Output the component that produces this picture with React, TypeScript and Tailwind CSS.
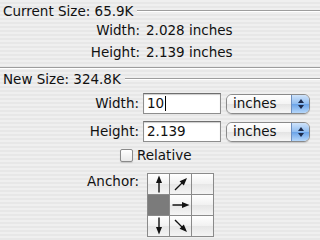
import React from "react";

const stripes =
  "bg-[repeating-linear-gradient(to_bottom,#efefef_0px,#efefef_2px,#e7e7e7_2px,#e7e7e7_4px)]";

const SectionHeader = ({ title }: { title: string }) => (
  <div className="flex h-[16px] items-center gap-[4px] pl-[3px]">
    <span className="whitespace-nowrap">{title}</span>
    <div className="h-[2px] flex-1 border-t border-b border-t-[#9d9d9d] border-b-white" />
  </div>
);

const InfoRow = ({ label, value }: { label: string; value: string }) => (
  <div className="flex h-[22px] items-center">
    <span className="w-[140px] text-right">{label}</span>
    <span className="pl-[6px]">{value}</span>
  </div>
);

const UnitSelect = () => (
  <div className="flex h-[20px] w-[84px] overflow-hidden rounded-[6px] border border-[#8a8a8a] shadow-[0_1px_1px_rgba(0,0,0,0.15)]">
    <div className="flex flex-1 items-center bg-[linear-gradient(to_bottom,#ffffff,#f3f3f3_50%,#e4e4e4_51%,#f6f6f6)] pl-[6px]">
      inches
    </div>
    <div className="flex w-[18px] flex-col items-center justify-center gap-[2px] border-l border-[#6d8fc0] bg-[linear-gradient(to_bottom,#cfe3fa,#8fbcf0_50%,#6aa3e8_51%,#b6d7fa)]">
      <svg width="6" height="4" viewBox="0 0 6 4">
        <polygon points="3,0 6,4 0,4" fill="#1c2a4a" />
      </svg>
      <svg width="6" height="4" viewBox="0 0 6 4">
        <polygon points="0,0 6,0 3,4" fill="#1c2a4a" />
      </svg>
    </div>
  </div>
);

const InputRow = ({ label, value, caret }: { label: string; value: string; caret?: boolean }) => (
  <div className="flex h-[21px] items-center">
    <span className="w-[139px] text-right">{label}</span>
    <div className="ml-[4px] flex h-[21px] w-[78px] items-center border border-[#8e8e8e] border-t-[#6e6e6e] bg-white pl-[3px] shadow-[inset_0_1px_1px_rgba(0,0,0,0.2)]">
      {value}
      {caret && <span className="ml-[1px] h-[15px] w-px bg-black" />}
    </div>
    <div className="ml-[5px]">
      <UnitSelect />
    </div>
  </div>
);

const Arrow = ({ rotate }: { rotate: number }) => (
  <svg width="18" height="18" viewBox="0 0 18 18" style={{ transform: `rotate(${rotate}deg)` }}>
    <line x1="9" y1="17.5" x2="9" y2="6" stroke="#111" strokeWidth="1.4" />
    <polygon points="9,0.5 6,8 12,8" fill="#111" />
  </svg>
);

const cells: (number | null | "fill")[] = [0, 45, null, "fill", 90, null, 180, 135, null];

const AnchorGrid = () => (
  <div className="grid grid-cols-[22px_22px_22px] grid-rows-[21px_21px_21px] border-t border-l border-[#8a8a8a]">
    {cells.map((c, i) => (
      <div
        key={i}
        className={
          c === "fill"
            ? "flex items-center justify-center border-r border-b border-[#8a8a8a] bg-[#7b7b7b]"
            : "flex items-center justify-center border-r border-b border-[#8a8a8a] bg-[linear-gradient(to_bottom,#ffffff,#f1f1f1_50%,#e6e6e6_51%,#f4f4f4)]"
        }
      >
        {typeof c === "number" && <Arrow rotate={c} />}
      </div>
    ))}
  </div>
);

export default function App() {
  return (
    <div
      className={`flex h-[240px] w-[320px] flex-col overflow-hidden ${stripes} font-['DejaVu_Sans',sans-serif] text-[13.5px] text-[#111]`}
    >
      <div className="pt-[3px]">
        <SectionHeader title="Current Size: 65.9K" />
      </div>
      <InfoRow label="Width:" value="2.028 inches" />
      <InfoRow label="Height:" value="2.139 inches" />
      <div className="mt-[4px] h-[2px] border-t border-b border-t-[#9d9d9d] border-b-white" />
      <div className="mt-[2px]">
        <SectionHeader title="New Size: 324.8K" />
      </div>
      <div className="mt-[6px] flex flex-col gap-[7px]">
        <InputRow label="Width:" value="10" caret />
        <InputRow label="Height:" value="2.139" />
      </div>
      <div className="mt-[7px] flex h-[13px] items-center pl-[120px]">
        <div className="h-[13px] w-[13px] rounded-[2px] border border-[#8a8a8a] bg-[linear-gradient(to_bottom,#ffffff,#e9e9e9)] shadow-[0_1px_1px_rgba(0,0,0,0.15)]" />
        <span className="ml-[4px]">Relative</span>
      </div>
      <div className="mt-[11px] flex">
        <span className="mt-[-2px] w-[139px] text-right">Anchor:</span>
        <div className="ml-[8px]">
          <AnchorGrid />
        </div>
      </div>
    </div>
  );
}
